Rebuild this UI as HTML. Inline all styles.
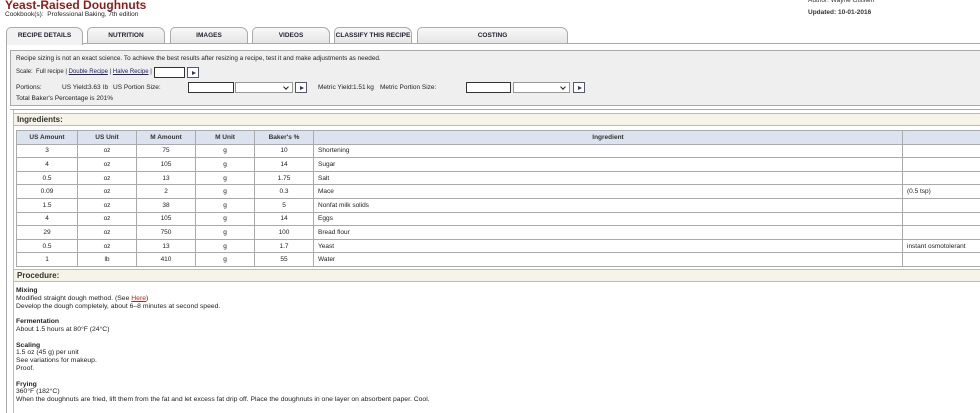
<!DOCTYPE html>
<html><head><meta charset="utf-8"><style>
*{margin:0;padding:0;box-sizing:border-box}
body{width:980px;height:413px;overflow:hidden;background:#fff;font-family:"Liberation Sans",Arial,sans-serif;font-size:6.5px;color:#222;position:relative}
.a{position:absolute;white-space:nowrap}
.title{left:5px;top:-2px;font-size:12px;font-weight:bold;color:#8b1d1d}
.tab{position:absolute;top:27px;height:17px;border:1px solid #aaa;border-bottom:none;border-radius:5px 7px 0 0;background:linear-gradient(#f8f8f8,#e4e4e4);font-weight:bold;font-size:6.5px;color:#223;text-align:center;line-height:16px}
.tab.act{background:#f2f2f2;height:18px;z-index:2}
.in{position:absolute;border:1px solid #333;height:11px;background:#fff}
.sel{position:absolute;border:1px solid #999;height:11px;background:#fff}
.sel:after{content:"";position:absolute;right:4px;top:2px;width:3px;height:3px;border-right:1.2px solid #222;border-bottom:1.2px solid #222;transform:rotate(45deg)}
.go{position:absolute;border:1px solid #557;width:12px;height:11px;background:#fff}
.go:after{content:"";position:absolute;left:4px;top:2.5px;border-left:4px solid #336;border-top:2.5px solid transparent;border-bottom:2.5px solid transparent}
table{position:absolute;left:16px;top:130px;border-collapse:collapse;width:980px}
td,th{border:1px solid #aaa;height:13.6px;text-align:center;font-size:6.5px;padding:0}
th{background:#dde3ee;font-weight:bold;color:#333}
td.l{text-align:left;padding-left:4px}
.ph{position:absolute;left:13px;width:967px;height:13px;background:#f6f4e6;border:1px solid #bbb;border-right:none;font-weight:bold;font-size:8px;padding-left:3px;line-height:12px;color:#333}
.proc{left:16px;top:287px;line-height:7.8px;font-size:6.8px}
</style></head><body>
<div class="a title">Yeast-Raised Doughnuts</div>
<div class="a" style="left:5px;top:11px">Cookbook(s):&nbsp; Professional Baking, 7th edition</div>
<div class="a" style="left:808px;top:-3px;color:#333">Author: Wayne Gisslen</div>
<div class="a" style="left:808px;top:9px;font-weight:bold;color:#333">Updated: 10-01-2016</div>

<div class="tab act" style="left:6px;width:77px">RECIPE DETAILS</div>
<div class="tab" style="left:87px;width:78px">NUTRITION</div>
<div class="tab" style="left:170px;width:78px">IMAGES</div>
<div class="tab" style="left:252px;width:78px">VIDEOS</div>
<div class="tab" style="left:334px;width:78px">CLASSIFY THIS RECIPE</div>
<div class="tab" style="left:417px;width:151px">COSTING</div>
<div class="a" style="left:6px;top:43px;width:974px;height:1px;background:#aaa"></div>
<div class="a" style="left:6px;top:43px;width:1px;height:370px;background:#aaa"></div>

<div class="a" style="left:10px;top:50px;width:970px;height:56px;background:#efefef;border:1px solid #aaa;border-right:none"></div>
<div class="a" style="left:16px;top:55px;font-size:6.4px">Recipe sizing is not an exact science. To achieve the best results after resizing a recipe, test it and make adjustments as needed.</div>
<div class="a" style="left:16px;top:69px;font-size:6px">Scale:&nbsp; Full recipe | <u style="color:#226">Double Recipe</u> | <u style="color:#226">Halve Recipe</u> |</div>
<div class="in" style="left:154px;top:67px;width:31px"></div><div class="go" style="left:187px;top:67px"></div>
<div class="a" style="left:16px;top:84px">Portions:</div>
<div class="a" style="left:62px;top:84px">US Yield:</div>
<div class="a" style="left:88px;top:84px">3.63</div>
<div class="a" style="left:103px;top:84px">lb</div>
<div class="a" style="left:113px;top:84px">US Portion Size:</div>
<div class="in" style="left:188px;top:82px;width:46px"></div><div class="sel" style="left:235px;top:82px;width:58px"></div><div class="go" style="left:295px;top:82px"></div>
<div class="a" style="left:318px;top:84px">Metric Yield:</div>
<div class="a" style="left:353px;top:84px">1.51</div>
<div class="a" style="left:367px;top:84px">kg</div>
<div class="a" style="left:380px;top:84px">Metric Portion Size:</div>
<div class="in" style="left:466px;top:82px;width:45px"></div><div class="sel" style="left:513px;top:82px;width:57px"></div><div class="go" style="left:573px;top:82px"></div>
<div class="a" style="left:16px;top:95px">Total Baker's Percentage is 201%</div>

<div class="a" style="left:10px;top:109px;width:970px;height:1px;background:#aaa"></div>
<div class="ph" style="top:113px">Ingredients:</div>
<table>
<colgroup><col style="width:61px"><col style="width:59px"><col style="width:59px"><col style="width:59px"><col style="width:59px"><col style="width:589px"><col></colgroup>
<tr><th>US Amount</th><th>US Unit</th><th>M Amount</th><th>M Unit</th><th>Baker's %</th><th>Ingredient</th><th></th></tr>
<tr><td>3</td><td>oz</td><td>75</td><td>g</td><td>10</td><td class="l">Shortening</td><td></td></tr>
<tr><td>4</td><td>oz</td><td>105</td><td>g</td><td>14</td><td class="l">Sugar</td><td></td></tr>
<tr><td>0.5</td><td>oz</td><td>13</td><td>g</td><td>1.75</td><td class="l">Salt</td><td></td></tr>
<tr><td>0.09</td><td>oz</td><td>2</td><td>g</td><td>0.3</td><td class="l">Mace</td><td class="l">(0.5 tsp)</td></tr>
<tr><td>1.5</td><td>oz</td><td>38</td><td>g</td><td>5</td><td class="l">Nonfat milk solids</td><td></td></tr>
<tr><td>4</td><td>oz</td><td>105</td><td>g</td><td>14</td><td class="l">Eggs</td><td></td></tr>
<tr><td>29</td><td>oz</td><td>750</td><td>g</td><td>100</td><td class="l">Bread flour</td><td></td></tr>
<tr><td>0.5</td><td>oz</td><td>13</td><td>g</td><td>1.7</td><td class="l">Yeast</td><td class="l">instant osmotolerant</td></tr>
<tr><td>1</td><td>lb</td><td>410</td><td>g</td><td>55</td><td class="l">Water</td><td></td></tr>
</table>
<div class="a" style="left:13px;top:110px;width:1px;height:303px;background:#bbb"></div>
<div class="ph" style="top:269px">Procedure:</div>
<div class="a proc"><b>Mixing</b><br>Modified straight dough method. (See <u style="color:#b22">Here</u>)<br>Develop the dough completely, about 6–8 minutes at second speed.<br><br><b>Fermentation</b><br>About 1.5 hours at 80°F (24°C)<br><br><b>Scaling</b><br>1.5 oz (45 g) per unit<br>See variations for makeup.<br>Proof.<br><br><b>Frying</b><br>360°F (182°C)<br>When the doughnuts are fried, lift them from the fat and let excess fat drip off. Place the doughnuts in one layer on absorbent paper. Cool.</div>
</body></html>
